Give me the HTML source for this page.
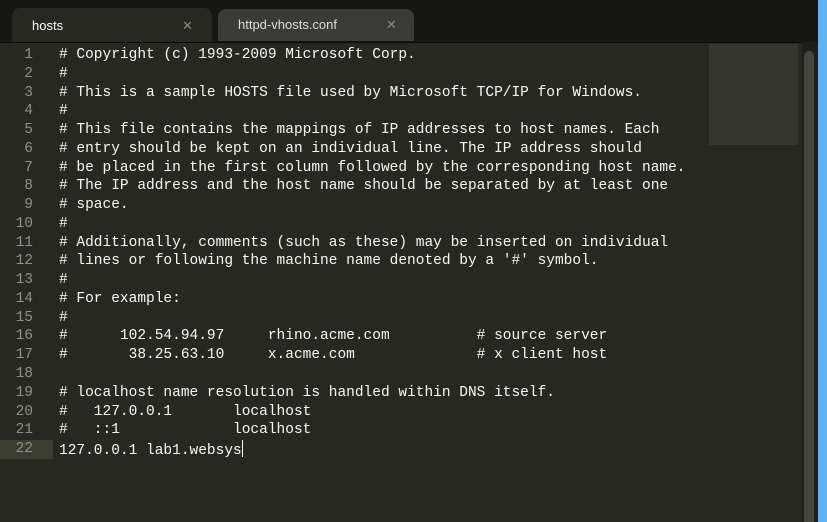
<!DOCTYPE html>
<html><head><style>
html,body{margin:0;width:827px;height:522px;overflow:hidden}
body{background:#272822;position:relative;font-family:"Liberation Mono",monospace}
.tabbar{position:absolute;left:0;top:0;width:818px;height:42px;background:#161613;border-bottom:1px solid #0c0c0a}
.tab{position:absolute;top:8px;height:34px;border-radius:8px 8px 0 0;font-family:"Liberation Sans",sans-serif;font-size:13px;color:#fff;box-sizing:border-box;padding:10px 0 0 20px}
.tab .x{position:absolute;top:10px;color:#888;font-size:13px}
.t1{left:12px;width:200px;background:#272822;z-index:2}
.t2{left:218px;width:196px;background:#3a3b36;color:#ddd;top:9px;height:32px;padding-top:8px}
.t2 .x{top:8px}
.gutter{position:absolute;left:0;top:46px;width:33px;text-align:right;color:#8f908a;font-size:14.5px;line-height:18.76px}
.code{position:absolute;left:59px;top:46px;color:#f8f8f2;font-size:14.5px;line-height:18.76px;white-space:pre}
.hl{position:absolute;left:0;top:440px;width:53px;height:19px;background:#3e3d32}
.mm{position:absolute;left:709px;top:44px;width:89px;height:101px;background:#35362f}
.sb{position:absolute;left:802px;top:42px;width:16px;height:480px;background:#1e1f1a;overflow:hidden}
.sb div{position:absolute;left:2px;top:9px;width:10px;height:480px;background:#45463f;border-radius:5px}
.blue{position:absolute;left:818px;top:0;width:9px;height:522px;background:#62b0f5}
.cur{display:inline-block;width:1px;height:17px;background:#f8f8f0;vertical-align:-3px}
</style></head><body>
<div class="tabbar">
<div class="tab t2">httpd-vhosts.conf<span class="x" style="left:168px">✕</span></div>
<div class="tab t1">hosts<span class="x" style="left:170px">✕</span></div>
</div>
<div class="hl"></div>
<div class="gutter">1<br>2<br>3<br>4<br>5<br>6<br>7<br>8<br>9<br>10<br>11<br>12<br>13<br>14<br>15<br>16<br>17<br>18<br>19<br>20<br>21<br>22</div>
<div class="code"># Copyright (c) 1993-2009 Microsoft Corp.
#
# This is a sample HOSTS file used by Microsoft TCP/IP for Windows.
#
# This file contains the mappings of IP addresses to host names. Each
# entry should be kept on an individual line. The IP address should
# be placed in the first column followed by the corresponding host name.
# The IP address and the host name should be separated by at least one
# space.
#
# Additionally, comments (such as these) may be inserted on individual
# lines or following the machine name denoted by a '#' symbol.
#
# For example:
#
#      102.54.94.97     rhino.acme.com          # source server
#       38.25.63.10     x.acme.com              # x client host

# localhost name resolution is handled within DNS itself.
#   127.0.0.1       localhost
#   ::1             localhost
127.0.0.1 lab1.websys<span class="cur"></span></div>
<div class="mm"></div>
<div class="sb"><div></div></div>
<div class="blue"></div>
</body></html>
